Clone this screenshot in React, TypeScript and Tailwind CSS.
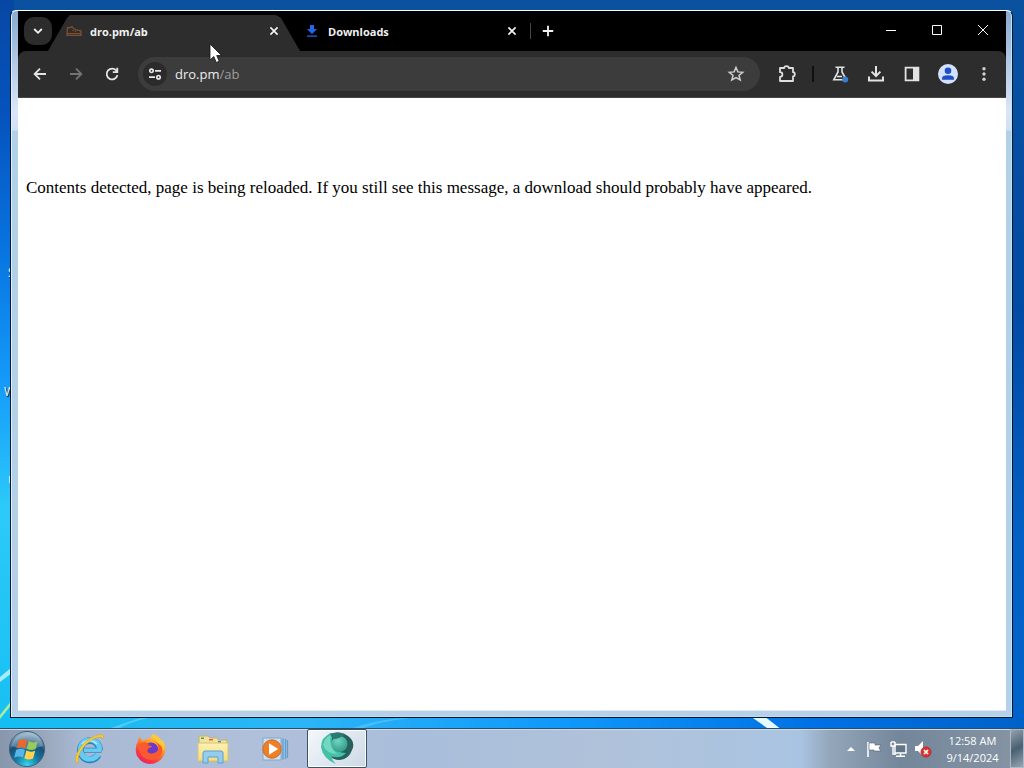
import type { ReactNode } from "react";

const ui = "font-['Open_Sans','Noto_Sans',sans-serif]";

function Wallpaper() {
  return (
    <svg className="absolute inset-0 h-full w-full" viewBox="0 0 1024 768" preserveAspectRatio="none" aria-hidden="true">
      <defs>
        <linearGradient id="sky" x1="0" y1="0" x2="0" y2="1">
          <stop offset="0" stopColor="#0a529f" />
          <stop offset="0.4" stopColor="#034aa4" />
          <stop offset="0.7" stopColor="#0360c4" />
          <stop offset="1" stopColor="#0064cc" />
        </linearGradient>
        <linearGradient id="leftEdge" x1="0" y1="0" x2="0" y2="1">
          <stop offset="0" stopColor="#0747a4" />
          <stop offset="0.15" stopColor="#0653bd" />
          <stop offset="0.32" stopColor="#0773df" />
          <stop offset="0.5" stopColor="#159bfa" />
          <stop offset="0.66" stopColor="#2ccaf8" />
          <stop offset="1" stopColor="#14bdf2" />
        </linearGradient>
        <linearGradient id="floor" x1="0" y1="0" x2="1" y2="0">
          <stop offset="0" stopColor="#14bdf2" />
          <stop offset="0.3" stopColor="#2cb4f6" />
          <stop offset="0.55" stopColor="#1098fa" />
          <stop offset="0.8" stopColor="#0070e4" />
          <stop offset="1" stopColor="#0062c8" />
        </linearGradient>
      </defs>
      <rect width="1024" height="768" fill="url(#sky)" />
      <rect width="14" height="768" fill="url(#leftEdge)" />
      <rect y="714" width="1024" height="54" fill="url(#floor)" />
      <path d="M0 677L12 667V673L0 682z" fill="#a6ecfc" />
      <path d="M0 715L12 700V704L0 719z" fill="#a8ee9c" />
      <path d="M108 729Q124 723 140 718H148Q130 722 118 729z" fill="#4ccaf8" />
      <path d="M350 729Q370 721 402 718H410Q376 722 362 729z" fill="#48bdfa" />
      <path d="M750 716H764L782 730H770z" fill="#e6fbff" />
    </svg>
  );
}

function IconButton({ label, className, children }: { label: string; className: string; children: ReactNode }) {
  return (
    <button type="button" aria-label={label} className={`flex shrink-0 items-center justify-center ${className}`}>
      {children}
    </button>
  );
}

function CloseGlyph() {
  return (
    <svg width="10" height="10" viewBox="0 0 10 10" fill="none" stroke="#f1f1f1" strokeWidth="1.7">
      <path d="M1.4 1.4L8.6 8.6M8.6 1.4L1.4 8.6" />
    </svg>
  );
}

function TabStrip() {
  return (
    <div className="flex h-10 items-center bg-black text-[11px] leading-4 font-bold text-[#f1f1f1]">
      <IconButton label="Search tabs" className="ml-1.5 size-7 rounded-[10px] bg-[#2c2c2c]">
        <svg width="10" height="10" viewBox="0 0 10 10" fill="none" stroke="#f1f1f1" strokeWidth="1.8">
          <path d="M1.2 3L5 6.8L8.8 3" />
        </svg>
      </IconButton>
      <div className="-ml-1 flex h-9 w-[252px] shrink-0 items-center gap-2 self-end bg-[#2d2d2d] px-[18px] pb-1 [clip-path:polygon(19px_3px,22px_0,228px_0,233px_3px,252px_36px,0_36px)]">
        <svg className="shrink-0" width="16" height="16" viewBox="0 0 16 16" fill="none" stroke="#84502f" strokeWidth="1.2">
          <path d="M1.5 4Q2 5.8 4.3 4.3L6 3.8Q8 7 15 7.8V12.4H1zM1 10.5H15M7.5 6.7L6.7 8M9.8 7.5L9.1 8.7" />
        </svg>
        <span className="flex-1 pt-0.5">dro.pm/ab</span>
        <IconButton label="Close dro.pm/ab" className="size-4"><CloseGlyph /></IconButton>
      </div>
      <div className="flex w-[220px] shrink-0 items-center gap-2 pl-1">
        <svg className="shrink-0" width="16" height="16" viewBox="0 0 16 16" fill="#2367e8">
          <path d="M6 2H10V6H13L8 11L3 6H6zM3 12.4H13V13.8H3z" />
        </svg>
        <span className="flex-1 pt-0.5">Downloads</span>
        <IconButton label="Close Downloads" className="size-4"><CloseGlyph /></IconButton>
      </div>
      <span className="ml-2.5 h-4 w-px bg-[#474747]" />
      <IconButton label="New tab" className="ml-[9px] size-4">
        <svg width="12" height="12" viewBox="0 0 12 12" stroke="#f4f4f4" strokeWidth="1.8">
          <path d="M6 .8V11.2M.8 6H11.2" />
        </svg>
      </IconButton>
      <div className="ml-auto flex h-full pb-0.5">
        <IconButton label="Minimize" className="w-[46px]">
          <svg width="10" height="10" viewBox="0 0 10 10"><path d="M0 5H10V6H0z" fill="#fff" /></svg>
        </IconButton>
        <IconButton label="Maximize" className="w-[46px]">
          <svg width="10" height="10" viewBox="0 0 10 10" fill="none" stroke="#fff"><path d="M.5 .5H9.5V9.5H.5z" /></svg>
        </IconButton>
        <IconButton label="Close" className="w-[46px]">
          <svg width="10" height="10" viewBox="0 0 10 10" fill="none" stroke="#fff"><path d="M0 0L10 10M10 0L0 10" /></svg>
        </IconButton>
      </div>
    </div>
  );
}

function Toolbar() {
  return (
    <div className="bg-black">
      <div className="flex h-[47px] items-center rounded-t-lg border-b border-[#454545] bg-[#2d2d2d] px-1">
        <IconButton label="Back" className="h-9 w-9">
          <svg width="16" height="16" viewBox="0 0 16 16" fill="none" stroke="#e3e3e3" strokeWidth="1.8"><path d="M14 8H3M8 2.6L2.6 8L8 13.4" /></svg>
        </IconButton>
        <IconButton label="Forward" className="h-9 w-9">
          <svg width="16" height="16" viewBox="0 0 16 16" fill="none" stroke="#747474" strokeWidth="1.8"><path d="M2 8H13M8 2.6L13.4 8L8 13.4" /></svg>
        </IconButton>
        <IconButton label="Reload" className="h-9 w-9">
          <svg width="16" height="16" viewBox="0 0 16 16" fill="none" stroke="#e3e3e3" strokeWidth="1.8"><path d="M12.6 5A5.4 5.4 0 1 0 13.4 9.1M13.3 1.8V6.1H8.8" /></svg>
        </IconButton>
        <div className="ml-2 flex h-[34px] min-w-0 flex-1 items-center rounded-full bg-[#3c3c3c] pl-[5px] pr-1.5">
          <IconButton label="View site information" className="size-6 rounded-full bg-[#2b2b2b]">
            <svg width="14" height="14" viewBox="0 0 14 14" fill="none" stroke="#e8e8e8" strokeWidth="1.7">
              <circle cx="3.5" cy="3.8" r="1.7" /><path d="M7 3.8H13M1 10.2H7" /><circle cx="10.5" cy="10.2" r="1.7" />
            </svg>
          </IconButton>
          <button type="button" aria-label="Address: dro.pm/ab" className="ml-2 flex-1 cursor-text text-left text-[13px] leading-5 text-[#ececec]">
            dro.pm<span className="text-[#9c9c9c]">/ab</span>
          </button>
          <IconButton label="Bookmark this page" className="size-9">
            <svg width="18" height="18" viewBox="0 0 18 18" fill="none" stroke="#cfcfcf" strokeWidth="1.5"><path d="M9 2.5L10.9 6.9L15.7 7.3L12 10.4L13.2 15L9 12.5L4.8 15L6 10.4L2.3 7.3L7.1 6.9z" /></svg>
          </IconButton>
        </div>
        <IconButton label="Extensions" className="ml-[9px] h-9 w-9">
          <svg width="20" height="20" viewBox="0 0 20 20" fill="none" stroke="#dedede" strokeWidth="1.8" strokeLinejoin="round"><path d="M3 4H7.2C7.2 1.4 11.8 1.4 11.8 4H16V8.2C18.4 8.2 18.4 12.4 16 12.4V17H3V12.8C6.2 12.8 6.2 8.2 3 8.2z" /></svg>
        </IconButton>
        <span className="ml-[7px] mr-2 h-4 w-0.5 bg-[#101010]" />
        <IconButton label="Chrome Labs" className="h-9 w-9">
          <svg width="20" height="20" viewBox="0 0 20 20" fill="none" stroke="#e3e3e3" strokeWidth="1.6"><path d="M5.5 3.2H14.5M8 3.2V8L3.8 15.8H14L15.4 14L12 8V3.2" /><path d="M7 12.5H12" /><circle cx="15.2" cy="15.4" r="3" fill="#397fd0" stroke="none" /></svg>
        </IconButton>
        <IconButton label="Downloads" className="h-9 w-9">
          <svg width="20" height="20" viewBox="0 0 20 20" fill="none" stroke="#e3e3e3" strokeWidth="2"><path d="M10 2V11.5M5.6 7.6L10 12L14.4 7.6M3 12.5V16.5H17V12.5" /></svg>
        </IconButton>
        <IconButton label="Side panel" className="h-9 w-9">
          <svg width="16" height="16" viewBox="0 0 16 16" fill="none" stroke="#e3e3e3" strokeWidth="1.8"><path d="M1.6 1.6H14.4V14.4H1.6z" /><path d="M9 1H15V15H9z" fill="#e3e3e3" stroke="none" /></svg>
        </IconButton>
        <IconButton label="Profile" className="h-9 w-9">
          <svg width="20" height="20" viewBox="0 0 20 20" fill="#1f4fc4"><circle cx="10" cy="10" r="10" fill="#d2e2fc" /><circle cx="10" cy="6.8" r="3.3" /><path d="M4 15.8V14.4Q4 11.3 10 11.3T16 14.4V15.8z" /></svg>
        </IconButton>
        <IconButton label="Menu" className="h-9 w-9">
          <svg width="16" height="16" viewBox="0 0 16 16" fill="#d0d0d0"><circle cx="8" cy="2.8" r="1.7" /><circle cx="8" cy="8" r="1.7" /><circle cx="8" cy="13.2" r="1.7" /></svg>
        </IconButton>
      </div>
    </div>
  );
}

function StartOrb() {
  return (
    <svg width="38" height="38" viewBox="0 0 38 38" aria-hidden="true">
      <defs>
        <radialGradient id="orb" cx="0.5" cy="0.95" r="0.95"><stop offset="0" stopColor="#35d5ee" /><stop offset="0.35" stopColor="#127da3" /><stop offset="0.65" stopColor="#184f76" /><stop offset="1" stopColor="#9fc0d4" /></radialGradient>
      </defs>
      <circle cx="19" cy="19" r="17.6" fill="url(#orb)" stroke="#44617a" />
      <path d="M3 16Q7 4 19 3T35 16Q19 22 3 16z" fill="#fff" opacity=".25" />
      <path d="M10.8 10.6Q15 7.9 19.4 10.2L17.4 18.3Q13 16.1 8.6 18.5z" fill="#ea6730" />
      <path d="M20.8 10.9Q25 13.6 29.6 11.4L27.6 19Q23 21.2 18.8 18.8z" fill="#98cb58" />
      <path d="M8.1 20Q12.7 17.7 17 20L15 27.6Q11 25.6 6.2 27.7z" fill="#58b4ea" />
      <path d="M18.4 20.3Q22.4 22.8 27.2 20.7L25.1 28.6Q20.4 30.8 16.3 28.2z" fill="#ffd14c" />
    </svg>
  );
}

function ExplorerE() {
  return (
    <svg width="34" height="34" viewBox="0 0 34 34" fill="none" aria-hidden="true">
      <path d="M12 18.2H29.5" stroke="#2784be" strokeWidth="5" />
      <path d="M27.5 18.2A9.6 9.6 0 1 0 26.2 23" stroke="#2784be" strokeWidth="6.8" />
      <path d="M27.5 18.2A9.6 9.6 0 1 0 26 22.6" stroke="#66caf2" strokeWidth="5.2" />
      <path d="M12 18.2H29" stroke="#66caf2" strokeWidth="3.6" />
      <path d="M10 12Q17 5 25 12" stroke="#b4ebfb" strokeWidth="1.6" />
      <path d="M4.5 30.5C0 25 13 3 30 2.6Q33 3.4 30.6 7C30 2 16 7 8.6 19.5Q4.6 27 6.8 30.5z" fill="#f7cd38" stroke="#cf9d28" strokeWidth=".5" />
    </svg>
  );
}

function FirefoxIcon() {
  return (
    <svg width="32" height="32" viewBox="0 0 32 32" aria-hidden="true">
      <defs>
        <linearGradient id="fox" x1="0.8" y1="0" x2="0.2" y2="1"><stop stopColor="#ffed48" /><stop offset="0.42" stopColor="#ff8a24" /><stop offset="0.75" stopColor="#f83b42" /><stop offset="1" stopColor="#e51a72" /></linearGradient>
      </defs>
      <path d="M18 1Q25 4 27 9L28 7Q33 16 28 24Q23 31 15 31T2 23Q-1 15 3 8L4 4L8 8Q13 4 16 6Q15 3 18 1z" fill="url(#fox)" />
      <circle cx="16" cy="17" r="7.5" fill="#653ad0" />
      <path d="M3 12Q9 7 14 11Q18 10 18 13Q16 15 14 15Q11 18 15 20Q20 21 23 17Q25 12 19 8Q29 11 27 20Q24 27 16 27Q6 26 5 18z" fill="#fb5a30" />
      <path d="M12 12Q19 9 21.5 15Q21 20.5 16 20.5Q12.5 20 12.2 17Q14.5 16.5 17.5 13.5Q15 12 12 12z" fill="#6a3bc8" />
      <path d="M18 1Q19 8 25 12T26 22Q33 12 26 8Q24 3 18 1z" fill="#ffc934" />
    </svg>
  );
}

function FolderIcon() {
  return (
    <svg width="34" height="32" viewBox="0 0 34 32" aria-hidden="true">
      <defs>
        <linearGradient id="folder" x1="0" y1="0" x2="0" y2="1"><stop stopColor="#fdf2b4" /><stop offset="1" stopColor="#f3dc7c" /></linearGradient>
      </defs>
      <path d="M3 3H12L14 5H22V7H31V28H3z" fill="#f3e2a0" stroke="#c4b26c" />
      <path d="M5 4.5H8V6H5z" fill="#38a85e" /><path d="M13 6H17V7.5H13z" fill="#df6840" /><path d="M22 8H25V9.5H22z" fill="#3d87cb" />
      <path d="M2 10H32V28H2z" fill="url(#folder)" stroke="#d6c374" />
      <path d="M7 30V20Q7 18 9 18H25Q27 18 27 20V30H22V24H12V30z" fill="#93cdf0" stroke="#5a9fd2" />
    </svg>
  );
}

function MediaPlayerIcon() {
  return (
    <svg width="28" height="26" viewBox="0 0 28 26" aria-hidden="true">
      <path d="M2 2H20V24H2z" fill="#cbe0f0" stroke="#7da9ce" />
      <path d="M22 2.5V23.5M24.5 3V23M26.5 4V22" stroke="#5f9fce" strokeWidth="1.3" />
      <circle cx="11" cy="13" r="9.2" fill="#ee7f25" stroke="#d4691f" />
      <path d="M8 7.2L17.2 13L8 18.8z" fill="#fff" />
    </svg>
  );
}

function GlobeIcon() {
  return (
    <svg width="34" height="34" viewBox="0 0 34 34" aria-hidden="true">
      <defs>
        <radialGradient id="sphere" cx="0.4" cy="0.3" r="0.8"><stop stopColor="#6fd6c0" /><stop offset="1" stopColor="#2a9484" /></radialGradient>
      </defs>
      <path d="M9 3Q20-1 28 5T32 19Q29 28 20 29Q12 29 8 23z" fill="#26605f" />
      <path d="M11 2Q1 6 1 16Q3 28 16 33Q12 29 11.5 25.5Q21 28 26 22Q16 22 13 15Q10 9 14 3z" fill="#45bfa6" />
      <path d="M3 14Q5 6 11 4Q9 10 12 17Q14 21 18 23Q6 23 3 14z" fill="#72d8c2" />
      <circle cx="19.5" cy="13" r="8" fill="url(#sphere)" />
      <path d="M10 3Q18 0 25 3Q20 8 13 8z" fill="#2f7772" />
    </svg>
  );
}

function Taskbar() {
  return (
    <footer className="relative flex h-10 items-stretch border-t border-[#294f69] bg-[linear-gradient(90deg,#8796ab_0,#99a8bc_45px,#a9b9d3_80px,#b0bfda_260px,#a9bedb_420px,#b0c2da_600px,#a9c4e2_800px,#94a6ba_830px,#73869a_900px,#8795a4_100%)] shadow-[inset_0_1px_0_#c9dceb]">
      <IconButton label="Start" className="mr-[5px] w-[54px]"><StartOrb /></IconButton>
      <div className="flex gap-0.5">
        <IconButton label="Internet Explorer" className="w-[60px]"><ExplorerE /></IconButton>
        <IconButton label="Firefox" className="w-[60px]"><FirefoxIcon /></IconButton>
        <IconButton label="Windows Explorer" className="w-[60px]"><FolderIcon /></IconButton>
        <IconButton label="Media Player" className="w-[60px]"><MediaPlayerIcon /></IconButton>
        <IconButton label="Browser" className="w-[60px] rounded-xs border border-[#3b5267] bg-[linear-gradient(135deg,#f3f8fb,#ccd9e6)] pb-0.5 shadow-[inset_0_0_0_1px_#fff]"><GlobeIcon /></IconButton>
      </div>
      <div className="ml-auto flex items-center">
        <IconButton label="Show hidden icons" className="w-5">
          <svg width="8" height="5" viewBox="0 0 8 5"><path d="M0 5L4 1L8 5z" fill="#fff" /></svg>
        </IconButton>
        <IconButton label="Action Center" className="w-[26px]">
          <svg width="16" height="18" viewBox="0 0 16 18"><path d="M2 2V17" stroke="#fff" strokeWidth="1.6" /><path d="M3 3H9V5H15L12.8 8L15 11H8V10H3z" fill="#fff" stroke="#53616f" strokeWidth=".6" /></svg>
        </IconButton>
        <IconButton label="Network" className="w-6">
          <svg width="18" height="18" viewBox="0 0 18 18" fill="none" stroke="#fff" strokeWidth="1.4"><path d="M5 4.5H16V13H5z" fill="#627587" /><path d="M10.5 13V16M6 16.3H15M1 2V6H5V2M3 6V14H6M2 1V3M4 1V3" /></svg>
        </IconButton>
        <IconButton label="Volume muted" className="w-6">
          <svg width="18" height="18" viewBox="0 0 18 18"><path d="M1 6H4L9 1V16L4 11H1z" fill="#fff" /><circle cx="12" cy="12" r="5.2" fill="#d93430" stroke="#9e2424" strokeWidth=".5" /><path d="M10 10L14 14M14 10L10 14" stroke="#fff" strokeWidth="1.7" /></svg>
        </IconButton>
        <button type="button" className="w-[75px] text-center text-[11px] leading-[17px] text-white">
          <span className="block">12:58 AM</span>
          <span className="block">9/14/2024</span>
        </button>
        <button type="button" aria-label="Show desktop" className="h-full w-3.5 border border-[#adbbc8] bg-[linear-gradient(150deg,#93a1ae,#4b6072_50%,#95a5b3)]" />
      </div>
    </footer>
  );
}

export default function App() {
  return (
    <div className={`relative flex min-h-screen flex-col overflow-hidden bg-[#0656ad] ${ui}`}>
      <Wallpaper />
      <div className="absolute left-0 top-0 text-xs text-white [text-shadow:1px_1px_1px_#000]" aria-hidden="true">
        <span className="absolute left-2 top-[265px]">S</span>
        <span className="absolute left-1 top-[384px]">W</span>
        <span className="absolute left-2 top-[473px]">U</span>
      </div>
      <main className="relative mb-2.5 ml-2.5 mr-[11px] mt-2.5 flex flex-1 flex-col rounded-t-md border border-[#06162c] border-t-white bg-[linear-gradient(180deg,#87abd0_0,#dce5f8_100px,#d3dff3_119px,#b1d1e6_120px,#b5d0e8_100%)] pb-1.5 pl-[7px] pr-1.5 shadow-[inset_1px_0_0_#d8f1fb,inset_-1px_0_0_#b9e5f7,inset_0_-1px_0_#b9dff0]">
        <TabStrip />
        <Toolbar />
        <article className="flex-1 border-b border-[#e2eaf2] bg-white px-2 pt-20 font-['Liberation_Serif',serif] text-[17px] leading-5 text-black">
          <p>Contents detected, page is being reloaded. If you still see this message, a download should probably have appeared.</p>
        </article>
      </main>
      <Taskbar />
      <svg className="absolute left-[209px] top-[43px]" width="14" height="22" viewBox="0 0 14 22" aria-hidden="true">
        <path d="M1 1V17L4.8 13.5L7.3 19.5L10.2 18.2L7.7 12.5H12.5z" fill="#fff" stroke="#151515" strokeWidth=".8" />
      </svg>
    </div>
  );
}
